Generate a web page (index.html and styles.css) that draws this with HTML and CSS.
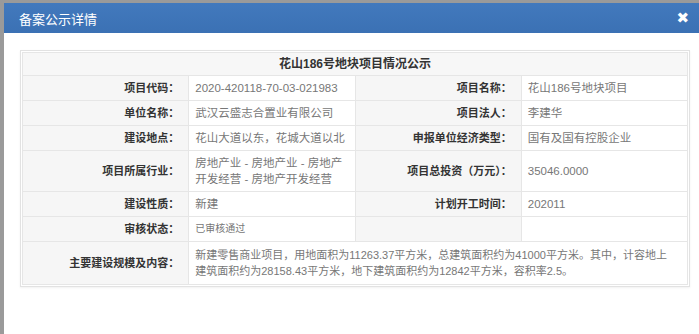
FILE: index.html
```html
<!DOCTYPE html>
<html lang="zh-CN">
<head>
<meta charset="UTF-8">
<title>备案公示详情</title>
<link rel="stylesheet" href="styles.css">
</head>
<body>

<!-- Dialog -->
<div class="dialog">
    <div class="dialog-header">
        <span class="dialog-title">备案公示详情</span>
        <span class="dialog-close">&#x2716;</span>
    </div>

    <div class="dialog-body">
        <div class="panel">
            <table class="info-table">
                <tr>
                    <th colspan="4" class="caption">花山186号地块项目情况公示</th>
                </tr>
                <tr>
                    <td class="label">项目代码：</td>
                    <td class="value">2020-420118-70-03-021983</td>
                    <td class="label">项目名称：</td>
                    <td class="value">花山186号地块项目</td>
                </tr>
                <tr>
                    <td class="label">单位名称：</td>
                    <td class="value">武汉云盛志合置业有限公司</td>
                    <td class="label">项目法人：</td>
                    <td class="value">李建华</td>
                </tr>
                <tr>
                    <td class="label">建设地点：</td>
                    <td class="value">花山大道以东，花城大道以北</td>
                    <td class="label">申报单位经济类型：</td>
                    <td class="value">国有及国有控股企业</td>
                </tr>
                <tr class="tall">
                    <td class="label">项目所属行业：</td>
                    <td class="value">房地产业 - 房地产业 - 房地产<br>开发经营 - 房地产开发经营</td>
                    <td class="label">项目总投资（万元）：</td>
                    <td class="value">35046.0000</td>
                </tr>
                <tr>
                    <td class="label">建设性质：</td>
                    <td class="value">新建</td>
                    <td class="label">计划开工时间：</td>
                    <td class="value">202011</td>
                </tr>
                <tr>
                    <td class="label">审核状态：</td>
                    <td class="value small">已审核通过</td>
                    <td class="label"></td>
                    <td class="value"></td>
                </tr>
                <tr class="tall last">
                    <td class="label">主要建设规模及内容：</td>
                    <td class="value long" colspan="3">新建零售商业项目，用地面积为11263.37平方米，总建筑面积约为41000平方米。其中，计容地上<br>建筑面积约为28158.43平方米，地下建筑面积约为12842平方米，容积率2.5。</td>
                </tr>
            </table>
        </div>
    </div>
</div>

</body>
</html>
```

FILE: styles.css
```css
/* General */
* {
    margin: 0;
    padding: 0;
    box-sizing: border-box;
}

html {
    background: #fff;
    overflow: hidden;
}

body {
    font-family: 'Liberation Sans', 'Noto Sans CJK SC', sans-serif;
    height: 334px;
    background: #fff;
    border-top: 3px solid #9a9a9a;
    border-left: 4px solid #9a9a9a;
}

/* Dialog */
.dialog {
    background: #fff;
    height: 331px;
}

.dialog-header {
    background: linear-gradient(to bottom, #4279bd, #3b71b4);
    height: 30px;
    display: flex;
    align-items: center;
    justify-content: space-between;
    padding: 0 10px 0 15px;
    color: #fff;
}

.dialog-title {
    font-size: 13px;
}

.dialog-close {
    font-size: 15px;
    font-weight: bold;
    font-family: 'DejaVu Sans', sans-serif;
}

.dialog-body {
    padding: 17px 0 0 16px;
}

/* Panel + table */
.panel {
    width: 670px;
    border: 1px solid #e2e2e2;
    padding: 1px;
    box-shadow: 0 1px 2px rgba(0, 0, 0, 0.06);
}

.info-table {
    width: 666px;
    border-collapse: collapse;
    table-layout: fixed;
    font-size: 11px;
}

.info-table td, .info-table th {
    border: 1px solid #e6e6e6;
    height: 25px;
    line-height: 16px;
}

.caption {
    background: #f7f7f7;
    color: #333;
    font-size: 12px;
    font-weight: bold;
    text-align: center;
    height: 23px !important;
}

.label {
    background: #f6f6f6;
    color: #333;
    font-weight: bold;
    text-align: right;
    padding-right: 9px;
    width: 167px;
}

.value {
    color: #777;
    padding-left: 6px;
    font-size: 11.5px;
}

.value.small {
    font-size: 10px;
}

.value.long {
    font-size: 11px;
    white-space: nowrap;
}

.tall td {
    height: 41px;
    padding-top: 2px;
    padding-bottom: 2px;
}

.tall.last td {
    height: 43px;
}
```
